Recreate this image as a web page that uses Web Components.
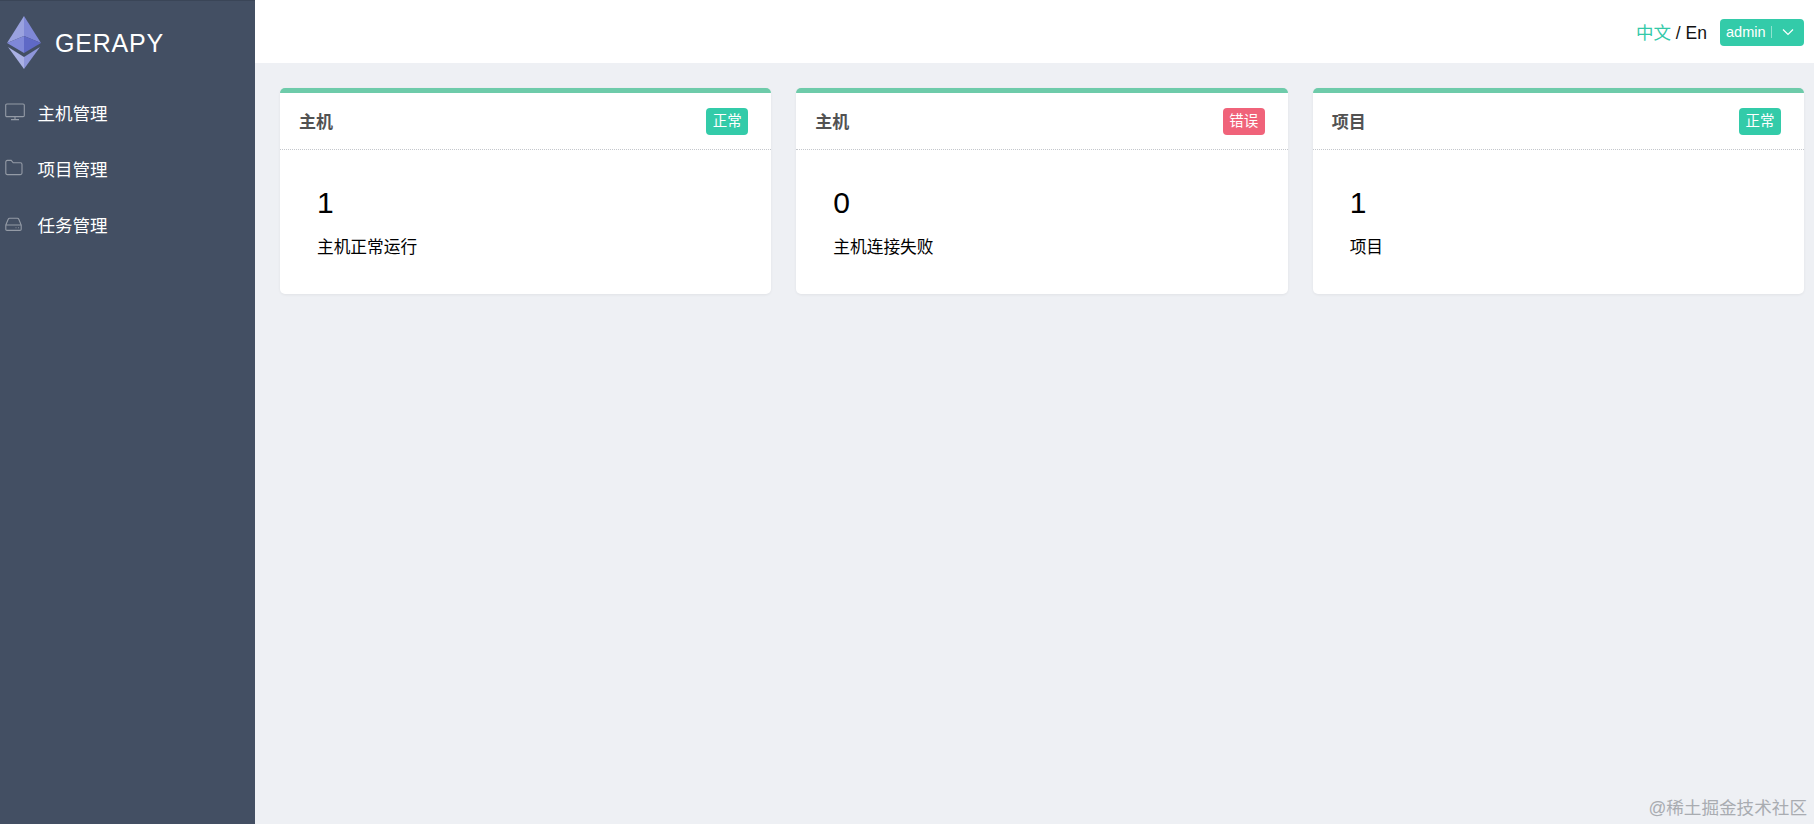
<!DOCTYPE html>
<html>
<head>
<meta charset="utf-8">
<title>Gerapy</title>
<style>
	html,body{margin:0;height:100%;}
	body{font-family:"Liberation Sans","Noto Sans CJK SC",sans-serif;}
</style>
</head>
<body>
<gerapy-app>
	<side-bar slot="side">
		<nav-item icon="monitor">主机管理</nav-item>
		<nav-item icon="folder">项目管理</nav-item>
		<nav-item icon="box">任务管理</nav-item>
	</side-bar>
	<top-bar slot="top"></top-bar>
	<stat-card title="主机" tag="正常" num="1" desc="主机正常运行"></stat-card>
	<stat-card title="主机" tag="错误" tagtype="err" num="0" desc="主机连接失败"></stat-card>
	<stat-card title="项目" tag="正常" num="1" desc="项目"></stat-card>
</gerapy-app>

<script>
class gerapyApp extends HTMLElement {
	constructor(){
		super();
		this.attachShadow({mode:'open'});
		this.shadowRoot.innerHTML = `
			<style>
				:host{display:flex;width:100%;height:824px;overflow:hidden;position:relative;background:#eef0f4;}
				.side{flex:0 0 255px;display:flex;}
				.right{flex:1;display:flex;flex-direction:column;min-width:0;}
				.cards{display:grid;grid-template-columns:repeat(3,1fr);gap:25px;padding:25px 10px 0 25px;align-items:start;}
				.mark{position:absolute;right:7px;bottom:6px;font-size:17.6px;line-height:20px;color:#a9acb1;}
			</style>
			<div class="side"><slot name="side"></slot></div>
			<div class="right">
				<slot name="top"></slot>
				<div class="cards"><slot></slot></div>
			</div>
			<div class="mark">@稀土掘金技术社区</div>
		`;
	}
}
customElements.define("gerapy-app", gerapyApp)

class sideBar extends HTMLElement {
	constructor(){
		super();
		this.attachShadow({mode:'open'});
		this.shadowRoot.innerHTML = `
			<style>
				:host{display:block;width:255px;background:#434f63;border-top:1px solid #3a4557;box-sizing:border-box;}
				.logo{display:flex;align-items:center;height:83px;padding:0 0 0 7px;gap:14px;color:#fff;font-size:25px;letter-spacing:.8px;}
				.logo svg{display:block;}
				.logo span{margin-top:1px;}
			</style>
			<div class="logo">
				<svg width="34" height="54" viewBox="0 0 34 54">
					<polygon points="17,0 0,27 17,20" fill="#9aa2df"/>
					<polygon points="17,0 34,27 17,20" fill="#7f88d6"/>
					<polygon points="17,20 0,27 17,37" fill="#7f88d8"/>
					<polygon points="17,20 34,27 17,37" fill="#5f69c6"/>
					<polygon points="1,31 17,41 17,53" fill="#aab1e4"/>
					<polygon points="33,31 17,41 17,53" fill="#8e96da"/>
				</svg>
				<span>GERAPY</span>
			</div>
			<slot></slot>
		`;
	}
}
customElements.define("side-bar", sideBar)

class navItem extends HTMLElement {
	getIcon(name){
		if(name === "monitor"){
			return `<rect x="0.7" y="1" width="18.6" height="12.6" rx="1.2"/><path d="M6 16.6h8M10 13.6v3"/>`;
		}
		if(name === "folder"){
			return `<path d="M0.8 3q0-1.6 1.6-1.6h3.8l2 2.4h7.2q1.6 0 1.6 1.6v8.6q0 1.6-1.6 1.6H2.4q-1.6 0-1.6-1.6z"/>`;
		}
		return `<path d="M0.8 10l2.4-5.8q.4-1 1.4-1h7.8q1 0 1.4 1L16.2 10v4.2q0 1.2-1.2 1.2H2q-1.2 0-1.2-1.2zM0.8 10h15.4"/><path d="M10.6 12.8h.8M13 12.8h.8"/>`;
	}
	connectedCallback(){
		this.attachShadow({mode:'open'});
		this.shadowRoot.innerHTML = `
			<style>
				:host{display:flex;align-items:center;height:56px;padding-left:5px;color:#fff;font-size:17.5px;}
				svg{flex:0 0 20px;margin-right:12.5px;fill:none;stroke:#949ba6;stroke-width:1.1;}
			</style>
			<svg width="20" height="18" viewBox="0 0 20 18">${this.getIcon(this.getAttribute('icon'))}</svg>
			<span><slot></slot></span>
		`;
	}
}
customElements.define("nav-item", navItem)

class topBar extends HTMLElement {
	constructor(){
		super();
		this.attachShadow({mode:'open'});
		this.shadowRoot.innerHTML = `
			<style>
				:host{display:flex;justify-content:flex-end;align-items:center;height:63px;background:#fff;padding-right:10px;font-size:17.5px;color:#111;}
				.zh{color:#33c9a8;}
				.lang{margin-right:13px;}
				.user{display:flex;align-items:center;height:27px;width:84px;box-sizing:border-box;padding-left:6px;background:#33cba9;border-radius:4px;color:#fff;font-size:14.5px;margin-top:1px;}
				.line{width:1px;height:12px;background:#8fe3cf;margin:0 10px 0 5px;}
			</style>
			<div class="lang"><span class="zh">中文</span> / En</div>
			<div class="user">
				<span>admin</span><i class="line"></i>
				<svg width="12" height="8" viewBox="0 0 12 8" fill="none" stroke="#fff" stroke-width="1.2"><path d="M1 1.5l5 5 5-5"/></svg>
			</div>
		`;
	}
}
customElements.define("top-bar", topBar)

class statCard extends HTMLElement {
	connectedCallback(){
		const tagColor = this.getAttribute('tagtype') === "err" ? "#f0637a" : "#33cba9";
		this.attachShadow({mode:'open'});
		this.shadowRoot.innerHTML = `
			<style>
				:host{display:block;height:206px;box-sizing:border-box;background:#fff;border-top:5px solid #6ecbaa;border-radius:5px;box-shadow:0 1px 3px rgba(0,0,0,.06);}
				.head{display:flex;justify-content:space-between;align-items:center;height:57px;box-sizing:border-box;padding:0 23px 0 19px;border-bottom:1px dotted #c4c7cc;}
				.title{font-size:17px;font-weight:bold;color:#525252;margin-top:-2px;}
				.tag{display:block;width:42px;height:27px;line-height:27px;text-align:center;border-radius:4px;color:#fff;font-size:14.5px;background:${tagColor};}
				.body{padding:33px 37px 0;color:#000;}
				.num{font-size:30px;line-height:40px;}
				.desc{font-size:16.7px;line-height:24px;margin-top:13px;}
			</style>
			<div class="head">
				<span class="title">${this.getAttribute('title')}</span>
				<span class="tag">${this.getAttribute('tag')}</span>
			</div>
			<div class="body">
				<div class="num">${this.getAttribute('num')}</div>
				<div class="desc">${this.getAttribute('desc')}</div>
			</div>
		`;
	}
}
customElements.define("stat-card", statCard)
</script>
</body>
</html>
